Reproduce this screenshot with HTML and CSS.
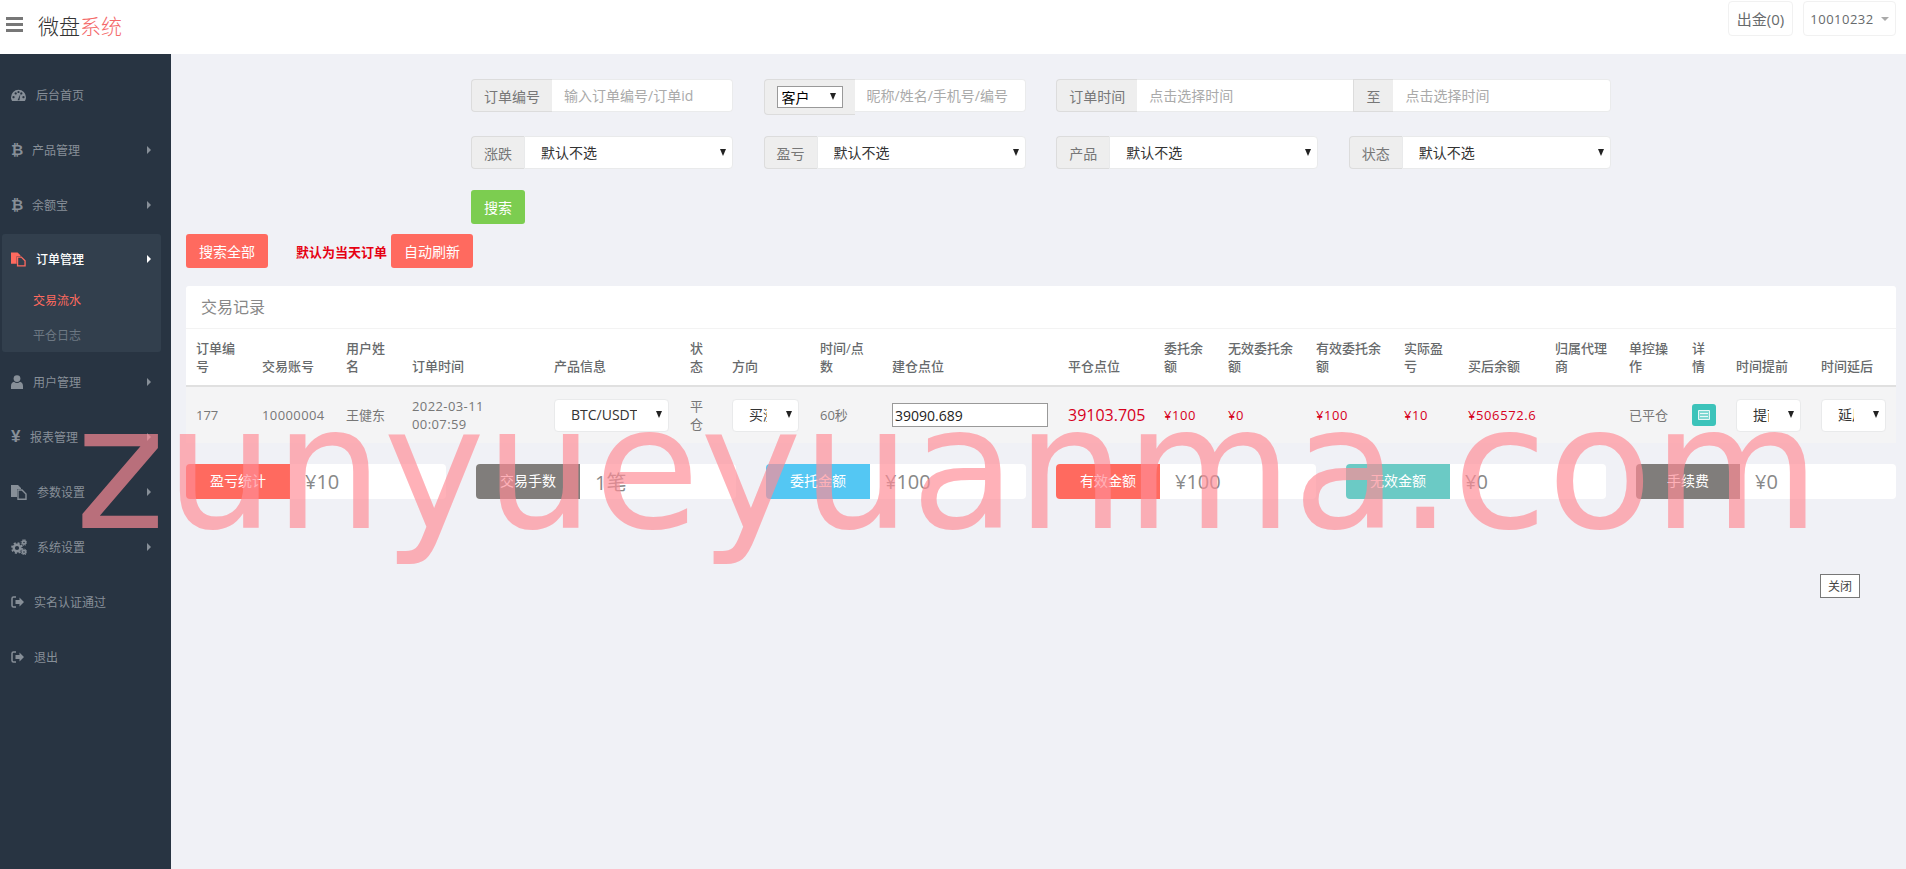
FILE: index.html

```html
<!DOCTYPE html>
<html lang="zh-CN">
<head>
  <meta charset="UTF-8" />
  <title>微盘系统</title>
  <link rel="stylesheet" href="styles.css">
</head>
<body>
<svg class="sprite" width="0" height="0">
  <symbol id="i-gauge" viewBox="0 0 16 14">
    <path fill-rule="evenodd" d="M0 9.5a8 8 0 0 1 16 0c0 1.6-.5 3-1.3 4H1.3C.5 12.500 0 11.100 0 9.500zM2.700 8a1.200 1.200 0 1 0 .01 0zM5 4a1.200 1.200 0 1 0 .01 0zM8 2.600a1.200 1.200 0 1 0 .01 0zM11 4a1.200 1.200 0 1 0 .01 0zM13.300 8a1.200 1.200 0 1 0 .01 0zM7 12.500h2L10 6z"/>
  </symbol>
  <symbol id="i-files" viewBox="0 0 16 16">
    <path d="M0 1h7l3 3v1H6v8H0z"/>
    <path d="M7 6h4l4 4v5.300H7z" fill="none" stroke="currentColor" stroke-width="1.400"/>
  </symbol>
  <symbol id="i-user" viewBox="0 0 12 14">
    <circle cx="6" cy="3.600" r="3.400"/>
    <path d="M0 14v-3c0-2.500 1.500-4 3-4.200.8.800 1.900 1.200 3 1.200s2.200-.4 3-1.200c1.500.2 3 1.700 3 4.200v3z"/>
  </symbol>
  <symbol id="i-cogs" viewBox="0 0 16 16">
    <circle cx="6" cy="9" r="3.300" fill="none" stroke="currentColor" stroke-width="2.400"/>
    <circle cx="6" cy="9" r="5" fill="none" stroke="currentColor" stroke-width="1.800" stroke-dasharray="2 1.930"/>
    <circle cx="13" cy="3.500" r="1.600" fill="none" stroke="currentColor" stroke-width="1.600"/>
    <circle cx="13" cy="3.500" r="2.900" fill="none" stroke="currentColor" stroke-width="1" stroke-dasharray="1.300 1"/>
    <circle cx="13" cy="13" r="1.600" fill="none" stroke="currentColor" stroke-width="1.600"/>
    <circle cx="13" cy="13" r="2.900" fill="none" stroke="currentColor" stroke-width="1" stroke-dasharray="1.300 1"/>
  </symbol>
  <symbol id="i-out" viewBox="0 0 13 12">
    <path d="M5 1H2.500A1.500 1.500 0 0 0 1 2.500v7A1.500 1.500 0 0 0 2.500 11H5" fill="none" stroke="currentColor" stroke-width="1.500"/>
    <path d="M4.500 4h4V1.500L13 6l-4.500 4.500V8h-4z"/>
  </symbol>
</svg>

<header class="topbar">
  <div class="bars"><i></i><i></i><i></i></div>
  <div class="logo">微盘<span>系统</span></div>
  <div class="top-right">
    <a class="top-btn">出金(0)</a>
    <a class="top-btn user-btn">10010232<b class="caret"></b></a>
  </div>
</header>

<div class="layout">
  <nav class="sidebar">
    <a class="nav-item"><svg class="ico w15"><use href="#i-gauge"/></svg>后台首页</a>
    <a class="nav-item has-sub"><span class="glyph">₿</span>产品管理</a>
    <a class="nav-item has-sub"><span class="glyph">₿</span>余额宝</a>
    <div class="nav-group">
      <a class="nav-item has-sub active"><svg class="ico w15 h16"><use href="#i-files"/></svg>订单管理</a>
      <a class="sub-item current">交易流水</a>
      <a class="sub-item">平仓日志</a>
    </div>
    <a class="nav-item has-sub"><svg class="ico w12"><use href="#i-user"/></svg>用户管理</a>
    <a class="nav-item has-sub"><span class="glyph yen">¥</span>报表管理</a>
    <a class="nav-item has-sub"><svg class="ico w16 h16"><use href="#i-files"/></svg>参数设置</a>
    <a class="nav-item has-sub"><svg class="ico w16 h16"><use href="#i-cogs"/></svg>系统设置</a>
    <a class="nav-item"><svg class="ico w13"><use href="#i-out"/></svg>实名认证通过</a>
    <a class="nav-item"><svg class="ico w13"><use href="#i-out"/></svg>退出</a>
  </nav>

  <main class="main">
    <form class="filters">
      <div class="field"><label class="addon">订单编号</label><input type="text" placeholder="输入订单编号/订单id"></div>
      <div class="field">
        <div class="addon addon-tall"><span class="mini-select"><select><option>客户</option></select></span></div>
        <input type="text" placeholder="昵称/姓名/手机号/编号">
      </div>
      <div class="field span2">
        <label class="addon">订单时间</label><input type="text" placeholder="点击选择时间">
        <label class="addon addon-mid">至</label><input type="text" placeholder="点击选择时间">
      </div>
      <div class="field"><label class="addon">涨跌</label><span class="select-wrap grow"><select><option>默认不选</option></select></span></div>
      <div class="field"><label class="addon">盈亏</label><span class="select-wrap grow"><select><option>默认不选</option></select></span></div>
      <div class="field"><label class="addon">产品</label><span class="select-wrap grow"><select><option>默认不选</option></select></span></div>
      <div class="field"><label class="addon">状态</label><span class="select-wrap grow"><select><option>默认不选</option></select></span></div>
    </form>
    <button class="btn btn-green search-btn" type="button">搜索</button>

    <div class="actions">
      <button class="btn btn-coral" type="button">搜索全部</button>
      <span class="hint">默认为当天订单</span>
      <button class="btn btn-coral" type="button">自动刷新</button>
    </div>

    <section class="card">
      <h5 class="card-title">交易记录</h5>
      <table class="trade">
        <colgroup>
          <col><col><col><col><col><col><col><col><col><col>
          <col><col><col><col><col><col><col><col><col><col>
        </colgroup>
        <thead>
          <tr>
            <th>订单编号</th><th>交易账号</th><th>用户姓名</th><th>订单时间</th><th>产品信息</th>
            <th>状态</th><th>方向</th><th>时间/点数</th><th>建仓点位</th><th>平仓点位</th>
            <th>委托余额</th><th>无效委托余额</th><th>有效委托余额</th><th>实际盈亏</th><th>买后余额</th>
            <th>归属代理商</th><th>单控操作</th><th>详情</th><th>时间提前</th><th>时间延后</th>
          </tr>
        </thead>
        <tbody>
          <tr>
            <td>177</td>
            <td class="num">10000004</td>
            <td>王健东</td>
            <td class="num">2022-03-11 00:07:59</td>
            <td><span class="select-wrap cell-select w115"><select><option>BTC/USDT</option></select></span></td>
            <td>平仓</td>
            <td><span class="select-wrap cell-select w67"><select><option>买涨</option></select></span></td>
            <td>60秒</td>
            <td><input class="price-input" type="text" value="39090.689"></td>
            <td class="red big">39103.705</td>
            <td class="red">¥100</td>
            <td class="red">¥0</td>
            <td class="red">¥100</td>
            <td class="red">¥10</td>
            <td class="red">¥506572.6</td>
            <td></td>
            <td>已平仓</td>
            <td>
              <a class="detail-btn">
                <svg width="12" height="10" viewBox="0 0 12 10"><path fill="#fff" fill-opacity=".35" stroke="#fff" stroke-opacity=".85" d="M.5.500h11v9H.5z"/><path stroke="#fff" stroke-opacity=".85" d="M2 3.500h8M2 6.500h8"/></svg>
              </a>
            </td>
            <td><span class="select-wrap cell-select w65"><select><option>提前</option></select></span></td>
            <td><span class="select-wrap cell-select w65"><select><option>延后</option></select></span></td>
          </tr>
        </tbody>
      </table>
    </section>

    <div class="stats">
      <div class="stat"><span class="stat-label bg-coral">盈亏统计</span><span class="stat-value">¥10</span></div>
      <div class="stat"><span class="stat-label bg-gray">交易手数</span><span class="stat-value">1笔</span></div>
      <div class="stat"><span class="stat-label bg-blue">委托金额</span><span class="stat-value">¥100</span></div>
      <div class="stat"><span class="stat-label bg-coral">有效金额</span><span class="stat-value">¥100</span></div>
      <div class="stat"><span class="stat-label bg-teal">无效金额</span><span class="stat-value">¥0</span></div>
      <div class="stat"><span class="stat-label bg-gray">手续费</span><span class="stat-value">¥0</span></div>
    </div>

    <div class="close-row"><button class="close-btn" type="button">关闭</button></div>
  </main>
</div>

<div class="watermark">zunyueyuanma.com</div>
</body>
</html>
```

FILE: styles.css

```css
* { box-sizing: border-box; }
html, body {
  margin: 0;
  height: 100%;
  overflow: hidden;
  font-family: "Open Sans", "Noto Sans CJK SC", sans-serif;
  font-size: 13px;
  color: #777;
  background: #f0f1f6;
}
.sprite { position: absolute; }

/* top bar */
.topbar {
  display: flex;
  align-items: center;
  height: 54px;
  padding: 0 10px 5px 6px;
  background: #fff;
}
.bars { display: flex; flex-direction: column; gap: 3px; width: 17px; margin-right: 15px; }
.bars i { display: block; height: 3px; background: #777; }
.logo { font-size: 21px; font-weight: 300; color: #333; }
.logo span { color: #f4696a; }
.top-right { display: flex; gap: 10px; margin-left: auto; align-self: flex-start; padding-top: 1px; }
.top-btn {
  display: flex;
  align-items: center;
  justify-content: center;
  width: 65px;
  height: 35px;
  font-size: 15px;
  color: #676a6c;
  border: 1px solid #f1f1f1;
  border-radius: 4px;
}
.user-btn { width: 93px; font-size: 13px; letter-spacing: .5px; gap: 7px; }
.caret {
  border-top: 4px solid #aaa;
  border-left: 4px solid transparent;
  border-right: 4px solid transparent;
}

/* sidebar */
.layout { display: flex; height: calc(100vh - 54px); }
.sidebar {
  flex: 0 0 171px;
  padding-top: 13px;
  background: #283442;
  color: #878f98;
  font-size: 12px;
}
.nav-item {
  display: flex;
  align-items: center;
  gap: 10px;
  height: 55px;
  padding: 0 20px 0 11px;
  position: relative;
}
.has-sub::after {
  content: "";
  margin-left: auto;
  border-left: 4px solid #878f98;
  border-top: 4px solid transparent;
  border-bottom: 4px solid transparent;
}
.ico { height: 14px; fill: currentColor; }
.w12 { width: 12px; }
.w13 { width: 13px; }
.w15 { width: 15px; }
.w16 { width: 16px; }
.h16 { height: 16px; }
.glyph { width: 11px; font: bold 15px "DejaVu Sans", sans-serif; line-height: 14px; }
.yen { width: 9px; font-family: "Liberation Sans", sans-serif; font-size: 17px; }
.nav-group {
  width: 159px;
  height: 118px;
  margin: 2px 0 2px 2px;
  border-radius: 3px;
  background: #323f4d;
}
.nav-group .nav-item { height: 48px; padding: 2px 10px 0 9px; }
.nav-item.active { color: #fff; font-weight: 500; }
.nav-item.active .ico { color: #ff6a5f; }
.nav-item.active::after { border-left-color: #fff; }
.sub-item { display: flex; align-items: center; height: 35px; padding-left: 31px; color: #6d7883; }
.sub-item.current { color: #ff6a5f; }

/* main */
.main { flex: 1; padding: 25px 10px 0 15px; }
.filters {
  display: grid;
  grid-template-columns: repeat(4, 262px);
  column-gap: 30.600px;
  row-gap: 24px;
  margin-left: 285px;
}
.field { display: flex; align-items: flex-start; height: 33px; }
.span2 { grid-column: span 2; }
.addon {
  flex: none;
  display: flex;
  align-items: center;
  height: 33px;
  padding: 0 12px;
  color: #777;
  font-size: 14px;
  background: #eee;
  border: 1px solid #dcdcdc;
  border-right: 0;
  border-radius: 4px 0 0 4px;
}
.addon-tall { height: 36px; }
.addon-mid { width: 40px; border-radius: 0; border-right: 0; }
.field input {
  flex: 1;
  min-width: 0;
  height: 33px;
  padding: 0 12px;
  font: inherit;
  font-size: 14px;
  background: #fff;
  border: 1px solid #eaebec;
  border-left: 0;
  border-radius: 0 4px 4px 0;
  outline: 0;
}
.field input:not(:last-child) { border-radius: 0; border-right: 0; }
.field input::placeholder { color: #aaa; }
.select-wrap { position: relative; display: inline-block; }
.select-wrap::after {
  content: "";
  position: absolute;
  top: 50%;
  right: 7px;
  margin-top: -4px;
  border-top: 7px solid #222;
  border-left: 3px solid transparent;
  border-right: 3px solid transparent;
  pointer-events: none;
}
.select-wrap select {
  width: 100%;
  height: 33px;
  padding: 0 31px 0 16px;
  appearance: none;
  font: inherit;
  font-size: 14px;
  color: #333;
  background: #fff;
  border: 1px solid #e9eaeb;
  border-radius: 0 4px 4px 0;
  outline: 0;
}
.grow { flex: 1; }
.mini-select { position: relative; display: block; width: 66px; }
.mini-select::after {
  content: "";
  position: absolute;
  top: 7px;
  right: 7px;
  border-top: 7px solid #222;
  border-left: 3px solid transparent;
  border-right: 3px solid transparent;
}
.mini-select select {
  width: 100%;
  height: 22px;
  padding: 0 4px;
  appearance: none;
  font: inherit;
  color: #000;
  background: #fff;
  border: 1px solid #999;
  border-radius: 0;
}
.btn {
  height: 34px;
  padding: 0;
  font: inherit;
  font-size: 14px;
  color: #fff;
  border: 0;
  border-radius: 3px;
}
.btn-green { background: #7ccd50; }
.btn-coral { width: 82px; background: #ff6a5f; }
.search-btn { display: block; width: 54px; margin: 21px 0 0 285px; }
.actions { display: flex; align-items: center; margin-top: 10px; }
.hint { margin: 0 4px 0 28px; font-weight: 700; color: #e60012; }

.card { margin-top: 18px; background: #fff; border-radius: 3px 3px 0 0; }
.card-title {
  margin: 0;
  height: 43px;
  padding: 0 15px;
  font-size: 16px;
  font-weight: 400;
  line-height: 42px;
  color: #888;
  border-bottom: 1px solid #f3f3f3;
}

/* table */
.trade { width: 100%; table-layout: fixed; border-collapse: collapse; }
.trade col:nth-child(1) { width: 66px; }
.trade col:nth-child(2) { width: 84px; }
.trade col:nth-child(3) { width: 66px; }
.trade col:nth-child(4) { width: 142px; }
.trade col:nth-child(5) { width: 136px; }
.trade col:nth-child(6) { width: 42px; }
.trade col:nth-child(7) { width: 88px; }
.trade col:nth-child(8) { width: 72px; }
.trade col:nth-child(9) { width: 176px; }
.trade col:nth-child(10) { width: 96px; }
.trade col:nth-child(11) { width: 64px; }
.trade col:nth-child(12) { width: 88px; }
.trade col:nth-child(13) { width: 88px; }
.trade col:nth-child(14) { width: 64px; }
.trade col:nth-child(15) { width: 87px; }
.trade col:nth-child(16) { width: 74px; }
.trade col:nth-child(17) { width: 63px; }
.trade col:nth-child(18) { width: 44px; }
.trade col:nth-child(19) { width: 85px; }
.trade col:nth-child(20) { width: 85px; }
.trade th {
  padding: 10px;
  font-weight: 500;
  line-height: 18px;
  text-align: left;
  vertical-align: bottom;
  color: #676a6c;
  background: #fff;
  border-bottom: 2px solid #e0e0e0;
}
.trade td {
  height: 54px;
  padding: 10px;
  line-height: 18px;
  background: #f4f4f5;
  vertical-align: middle;
}
.num { letter-spacing: .4px; }
.red { color: #d7001c; letter-spacing: .6px; }
.big { font-size: 16px; letter-spacing: 0; }
.cell-select select { border-radius: 4px; }
.w115 { width: 115px; }
.w67 { width: 67px; }
.w65 { width: 65px; }
.price-input {
  width: 156px;
  height: 24px;
  padding: 0 2px;
  font: inherit;
  font-size: 14px;
  color: #222;
  background: #fff;
  border: 1px solid #999;
  outline: 0;
}
.detail-btn {
  display: flex;
  align-items: center;
  justify-content: center;
  width: 24px;
  height: 22px;
  background: #3cc3ba;
  border-radius: 3px;
}

/* stats */
.stats {
  display: grid;
  grid-template-columns: repeat(6, 260px);
  column-gap: 30px;
  margin-top: 21px;
}
.stat { display: flex; align-items: center; height: 35px; background: #fff; border-radius: 4px; }
.stat-label {
  flex: 0 0 104px;
  height: 35px;
  line-height: 34px;
  text-align: center;
  font-size: 14px;
  color: #fff;
  border-radius: 4px 0 0 4px;
}
.stat-value { padding-left: 15px; font-size: 20px; color: #888; }
.bg-coral { background: #ff6a5f; }
.bg-gray { background: #807d7b; }
.bg-blue { background: #54c7f3; }
.bg-teal { background: #6bcac5; }

.close-row { display: flex; justify-content: flex-end; margin-top: 75px; padding-right: 36px; }
.close-btn {
  width: 40px;
  height: 24px;
  padding: 0;
  font: inherit;
  font-size: 12px;
  color: #444;
  background: #fff;
  border: 1px solid #777;
}

/* site mark laid over the whole page */
.watermark {
  position: absolute;
  top: 369px;
  left: 75px;
  font-family: "DejaVu Sans", sans-serif;
  font-size: 172px;
  line-height: 200px;
  color: rgba(255, 140, 151, .68);
  white-space: nowrap;
  pointer-events: none;
}
```
